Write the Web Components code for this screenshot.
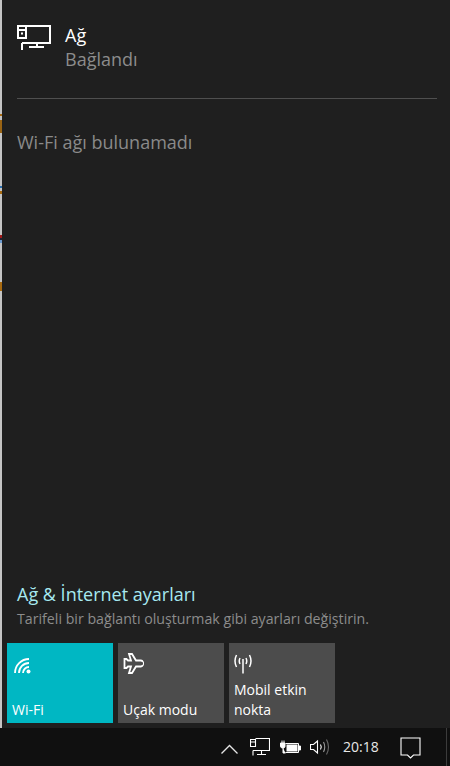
<!DOCTYPE html>
<html lang="tr">
<head>
<meta charset="utf-8">
<title>Ağ</title>
<style>
html, body { margin: 0; height: 100%; background: #101010; }
body { font-family: "Open Sans", "Noto Sans", sans-serif; }
</style>
</head>
<body>
<network-flyout>
  <network-header slot="top" title-text="Ağ" status="Bağlandı"></network-header>
  <p slot="top" class="none">Wi-Fi ağı bulunamadı</p>
  <settings-link slot="bottom" label="Ağ &amp; İnternet ayarları" hint="Tarifeli bir bağlantı oluşturmak gibi ayarları değiştirin."></settings-link>
  <tile-row slot="bottom">
    <quick-tile icon="wifi" active>Wi-Fi</quick-tile>
    <quick-tile icon="plane">Uçak modu</quick-tile>
    <quick-tile icon="mobile">Mobil etkin nokta</quick-tile>
  </tile-row>
</network-flyout>
<task-bar></task-bar>
<script>
const ICONS = {
  net: `<svg width="34" height="26" viewBox="0 0 34 26" fill="none" stroke="#fff" stroke-width="2">
    <path d="M9 1H33V18H5M12 22H27M20 18V22M5 18V25"/><path d="M1 1H9V13H1ZM1 5H9M4 8.500H6"/></svg>`,
  wifi: `<svg width="18" height="16" viewBox="0 0 18 16" fill="none" stroke="#fff" stroke-width="1.800">
    <path d="M1 15A14 14 0 0 1 15 1M5 15A10 10 0 0 1 15 5M9 15A6 6 0 0 1 15 9"/><circle cx="14.500" cy="13.500" r="2" fill="#fff" stroke="none"/></svg>`,
  plane: `<svg width="21" height="21" viewBox="0 0 21 21" fill="none" stroke="#fff" stroke-width="1.800">
    <path d="M6 1H9L13 7.500H18C20 7.500 20.500 10.500 20 10.500C20.500 10.500 20 13.500 18 13.500H13L9 20H6L8 13.500H5L3.500 15H1.500V6H3.500L5 7.500H8Z"/></svg>`,
  mobile: `<svg width="20" height="20" viewBox="0 0 20 20" fill="none" stroke="#fff" stroke-width="1.500">
    <path d="M10 5V19.500" stroke-width="1.500"/><path d="M7 4Q5.500 7 7 10M13 4Q14.500 7 13 10M3.500 1Q.5 7 3.500 13M16.500 1Q19.500 7 16.500 13"/></svg>`,
  chevron: `<svg width="17" height="10" viewBox="0 0 17 10" fill="none" stroke="#e6e6e6" stroke-width="1.300"><path d="M.5 9.500L8.500 1.500L16.500 9.500"/></svg>`,
  tray: `<svg width="20" height="18" viewBox="0 0 20 18" fill="none" stroke="#fff" stroke-width="1.100">
    <path d="M5.500 .5H19.500V12.500H3M7 16.500H16M11.500 12.500V16.500M3 12.500V17.500"/><path d="M.5 1.500H5.500V8.500H.5ZM.5 4H5.500"/></svg>`,
  battery: `<svg width="21" height="14" viewBox="0 0 21 14" fill="none" stroke="#fff" stroke-width="1">
    <path d="M5.500 3.500H18.500V12.500H5.500"/><rect x="6.500" y="4.500" width="11" height="7" fill="#fff" stroke="none"/><path d="M19 6H20.500V10H19" fill="#fff"/><path d="M2 .5V3M4 .5V3M.5 3H5V6.500C5 7.500 4 8 3 8S.5 7.500 .5 6.500ZM3 8V13H5.500" fill="#fff" stroke-width="1"/></svg>`,
  volume: `<svg width="21" height="16" viewBox="0 0 21 16" fill="none" stroke="#fff" stroke-width="1.100">
    <path d="M.5 5.500H3.500L7.500 2V14L3.500 10.500H.5Z"/><path d="M10.500 5.500Q12 8 10.500 10.500"/><path d="M13.500 3Q16 8 13.500 13" stroke="#9a9a9a"/><path d="M16.500 .5Q20.500 8 16.500 15.500" stroke="#6a6a6a"/></svg>`,
  note: `<svg width="21" height="22" viewBox="0 0 21 22" fill="none" stroke="#fff" stroke-width="1.100">
    <path d="M1 1H20V18H13.500L10.500 21L7.500 18H1Z"/></svg>`
};

// shadow root from a css + html pair
const shadow = (el, css, html) => {
  el.attachShadow({ mode: 'open' }).innerHTML = `<style>${css}</style>${html}`;
};

class NetworkFlyout extends HTMLElement {
  constructor() {
    super();
    shadow(this, `
      :host { display: flex; height: 728px; background: #1f1f1f; }
      .edge {
        flex: 0 0 2px;
        background: linear-gradient(#c4c4c4 0 114px, #a86a10 114px 116px, #c4c4c4 116px 120px, #9a6414 120px 133px,
          #c4c4c4 133px 186px, #2a6fb0 186px 188px, #c4c4c4 188px 191px, #a86a10 191px 194px,
          #c4c4c4 194px 235px, #a01818 235px 238px, #223 238px 240px, #6a9ad0 240px 243px,
          #c4c4c4 243px 282px, #a86a10 282px 291px, #c4c4c4 291px);
      }
      main { flex: 1; display: flex; flex-direction: column; justify-content: space-between; padding-bottom: 5px; min-width: 0; }
      ::slotted(.none) {
        margin: 31px 0 0 15px;
        font-size: 18px;
        line-height: 24px;
        color: #8a8a8a;
      }
    `, `<div class="edge"></div><main><div><slot name="top"></slot></div><div><slot name="bottom"></slot></div></main>`);
  }
}

class NetworkHeader extends HTMLElement {
  connectedCallback() {
    if (this.shadowRoot) return;
    shadow(this, `
      :host { display: block; margin: 0 13px 0 15px; padding-top: 23px; height: 75px; border-bottom: 1px solid #4f4f4f; }
      .row { display: flex; gap: 14px; }
      .icon { margin-top: 2px; height: 26px; }
      .name { font-size: 18px; line-height: 24px; color: #fff; }
      .status { font-size: 18px; line-height: 24px; color: #8c8c8c; }
    `, `<div class="row"><div class="icon">${ICONS.net}</div><div>
      <div class="name">${this.getAttribute('title-text')}</div>
      <div class="status">${this.getAttribute('status')}</div></div></div>`);
  }
}

class SettingsLink extends HTMLElement {
  connectedCallback() {
    if (this.shadowRoot) return;
    shadow(this, `
      :host { display: block; padding: 0 0 14px 15px; }
      .label { font-size: 18px; line-height: 24px; color: #a6e9f0; }
      .hint { margin-top: 3px; font-size: 14.200px; line-height: 20px; color: #8c8c8c; white-space: nowrap; }
    `, `<div class="label">${this.getAttribute('label')}</div><div class="hint">${this.getAttribute('hint')}</div>`);
  }
}

class TileRow extends HTMLElement {
  constructor() {
    super();
    shadow(this, `:host { display: flex; gap: 5px; padding-left: 5px; }`, `<slot></slot>`);
  }
}

class QuickTile extends HTMLElement {
  connectedCallback() {
    if (this.shadowRoot) return;
    shadow(this, `
      :host {
        box-sizing: border-box; flex: 0 0 106px; height: 80px; padding: 0 5px 3px;
        display: flex; flex-direction: column; justify-content: space-between;
        background: #4c4c4c; color: #fff; font-size: 14px; line-height: 20px;
      }
      :host([active]) { background: #00b7c3; }
      .icon { height: 21px; margin: 10px 0 0 0; }
      :host([icon=wifi]) .icon { margin: 15px 0 0 2px; }
      :host([icon=mobile]) .icon { margin: 11px 0 0 -1px; }
    `, `<div class="icon">${ICONS[this.getAttribute('icon')]}</div><div><slot></slot></div>`);
  }
}

class TaskBar extends HTMLElement {
  constructor() {
    super();
    shadow(this, `
      :host { display: flex; align-items: center; box-sizing: border-box; height: 38px; padding-left: 221px; background: #101010; color: #e8e8e8; }
      span { display: flex; }
      time { font-size: 14px; margin-left: 12px; line-height: 20px; }
      .rule { width: 1px; height: 38px; background: #3c3c3c; margin-left: 25px; }
    `, `
      <span style="margin-top:3px">${ICONS.chevron}</span>
      <span style="margin-left:12px">${ICONS.tray}</span>
      <span style="margin-left:10px">${ICONS.battery}</span>
      <span style="margin-left:9px">${ICONS.volume}</span>
      <time>20:18</time>
      <span style="margin-left:21px;margin-top:2px">${ICONS.note}</span>
      <div class="rule"></div>`);
  }
}

customElements.define('network-flyout', NetworkFlyout);
customElements.define('network-header', NetworkHeader);
customElements.define('settings-link', SettingsLink);
customElements.define('tile-row', TileRow);
customElements.define('quick-tile', QuickTile);
customElements.define('task-bar', TaskBar);
</script>
</body>
</html>
